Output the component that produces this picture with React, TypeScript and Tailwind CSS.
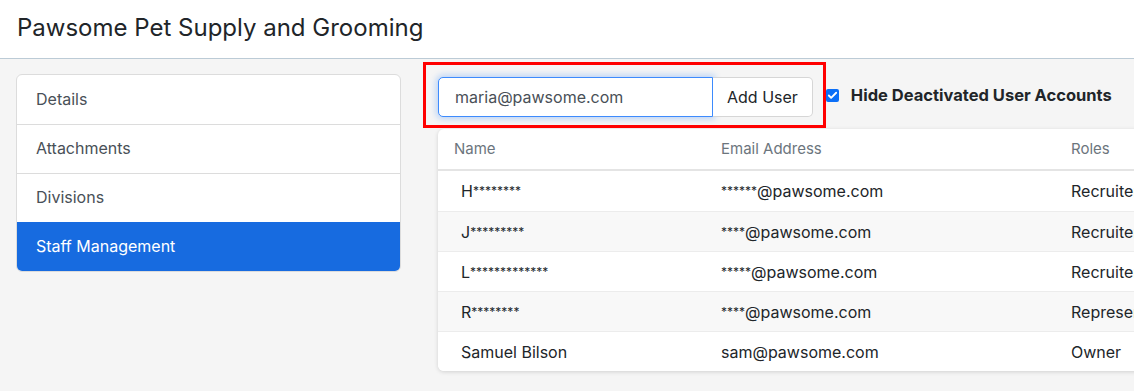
import { Check } from 'lucide-react';

const tabs = ['Details', 'Attachments', 'Divisions', 'Staff Management'];

const users = [
  { name: 'H********', email: '******@pawsome.com', role: 'Recruiter' },
  { name: 'J*********', email: '****@pawsome.com', role: 'Recruiter' },
  { name: 'L*************', email: '*****@pawsome.com', role: 'Recruiter' },
  { name: 'R********', email: '****@pawsome.com', role: 'Representative' },
  { name: 'Samuel Bilson', email: 'sam@pawsome.com', role: 'Owner' },
];

// masked values render their asterisks small and raised
function Masked({ text }: { text: string }) {
  const parts = text.split(/(\*+)/);
  return (
    <>
      {parts.map((p, i) =>
        p.startsWith('*') ? (
          <span key={i} className="align-[2px] text-[12px] leading-none">
            {p}
          </span>
        ) : (
          <span key={i}>{p}</span>
        )
      )}
    </>
  );
}

export default function App() {
  return (
    <div className="h-[391px] w-full overflow-hidden bg-[#f5f5f5] font-['Inter',sans-serif] text-[#212529]">
      <header className="h-[59px] border-b border-[#bccbd6] bg-white pl-[17px] pt-[12px]">
        <h1 className="text-[24px] leading-[32px]">Pawsome Pet Supply and Grooming</h1>
      </header>

      <div className="flex">
        {/* sidebar tabs */}
        <div className="ml-4 mt-[15px] w-[385px] shrink-0 self-start overflow-hidden rounded-md border border-[#dcdcdc] bg-white">
          {tabs.map((tab, i) => {
            const active = tab === 'Staff Management';
            return (
              <div
                key={tab}
                className={`flex h-[49px] items-center pb-[2px] pl-[19px] text-[16px] ${
                  active ? 'bg-[#176be0] text-white' : 'text-[#495057]'
                } ${i > 0 && !active ? 'border-t border-[#dcdcdc]' : ''}`}
              >
                {tab}
              </div>
            );
          })}
        </div>

        <div className="ml-[37px] min-w-0 flex-1 pt-[18px]">
          {/* toolbar */}
          <div className="relative flex items-center">
            <div className="flex h-10">
              <div className="flex w-[275px] items-center rounded-l-[5px] border border-[#3d8bfd] bg-white pl-4 text-[16px] text-[#495057] shadow-[0_0_6px_2px_rgba(13,110,253,0.25)]">
                maria@pawsome.com
              </div>
              <button className="rounded-r-[5px] border border-l-0 border-[#d6d6d6] bg-white px-[14px] text-[16px] text-[#212529]">
                Add User
              </button>
            </div>
            <label className="mb-1 ml-[13px] flex items-center gap-3 whitespace-nowrap text-[16.5px] font-bold">
              <span className="flex h-[13px] w-[13px] items-center justify-center rounded-[2px] bg-[#0b6ff7]">
                <Check className="h-[11px] w-[11px] text-white" strokeWidth={4} />
              </span>
              Hide Deactivated User Accounts
            </label>
            {/* annotation box */}
            <div className="pointer-events-none absolute -left-[15px] -top-[15px] h-[66px] w-[403px] border-[3px] border-[#ff0000]" />
          </div>

          {/* users table */}
          <div className="mt-3 w-[760px] overflow-hidden rounded-md bg-white shadow-[0_1px_4px_rgba(0,0,0,0.15)]">
            <div className="flex h-[42px] items-center border-b-2 border-[#e4e4e4] text-[15px] text-[#6c757d]">
              <div className="w-[267px] pl-4">Name</div>
              <div className="w-[350px] pl-4">Email Address</div>
              <div className="pl-4">Roles</div>
            </div>
            {users.map((u, i) => (
              <div
                key={u.name}
                className={`flex h-10 items-center text-[16px] ${i % 2 === 1 ? 'bg-[#f8f8f8]' : 'bg-white'} ${
                  i > 0 ? 'border-t border-[#ececec]' : ''
                }`}
              >
                <div className="w-[267px] pl-[23px]">
                  <Masked text={u.name} />
                </div>
                <div className="w-[350px] pl-4">
                  <Masked text={u.email} />
                </div>
                <div className="whitespace-nowrap pl-4">{u.role}</div>
              </div>
            ))}
          </div>
        </div>
      </div>
    </div>
  );
}
